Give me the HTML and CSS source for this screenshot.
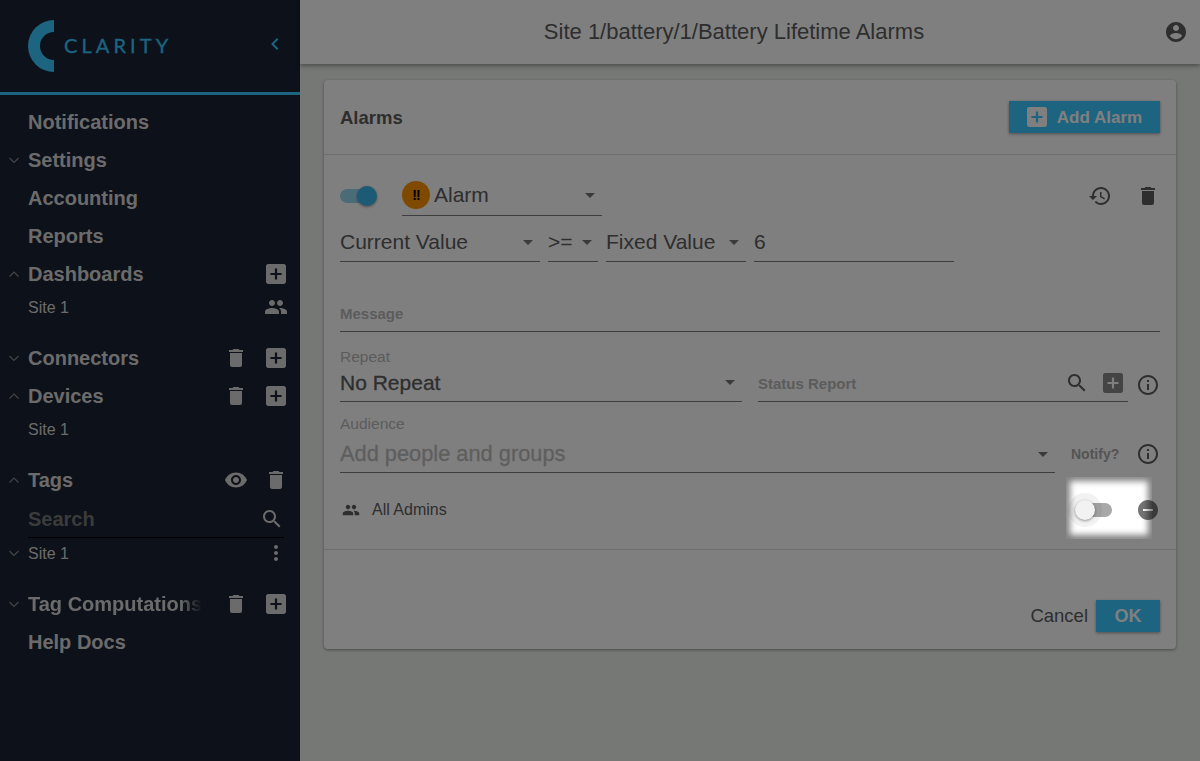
FILE: index.html
```html
<!DOCTYPE html>
<html lang="en">
<head>
    <meta charset="UTF-8">
    <title>Battery Lifetime Alarms</title>
    <link rel="stylesheet" href="styles.css">
</head>
<body>
    <svg class="sprite" xmlns="http://www.w3.org/2000/svg">
        <symbol id="i-trash" viewBox="0 0 24 24"><path d="M6 19c0 1.1.9 2 2 2h8c1.1 0 2-.9 2-2V7H6v12zM19 4h-3.5l-1-1h-5l-1 1H5v2h14V4z"/></symbol>
        <symbol id="i-add" viewBox="3 3 18 18"><path d="M19 3H5c-1.11 0-2 .9-2 2v14c0 1.1.89 2 2 2h14c1.1 0 2-.9 2-2V5c0-1.1-.9-2-2-2zm-2 10h-4v4h-2v-4H7v-2h4V7h2v4h4v2z"/></symbol>
        <symbol id="i-people" viewBox="0 0 24 24"><path d="M16 11c1.66 0 2.99-1.34 2.99-3S17.66 5 16 5c-1.66 0-3 1.34-3 3s1.34 3 3 3zm-8 0c1.66 0 2.99-1.34 2.99-3S9.66 5 8 5C6.34 5 5 6.34 5 8s1.34 3 3 3zm0 2c-2.33 0-7 1.17-7 3.5V19h14v-2.5c0-2.33-4.67-3.5-7-3.5zm8 0c-.29 0-.62.02-.97.05 1.16.84 1.97 1.97 1.97 3.45V19h6v-2.5c0-2.33-4.67-3.5-7-3.5z"/></symbol>
        <symbol id="i-eye" viewBox="0 0 24 24"><path d="M12 4.5C7 4.5 2.73 7.61 1 12c1.73 4.39 6 7.5 11 7.5s9.27-3.11 11-7.5c-1.73-4.39-6-7.5-11-7.5zM12 17c-2.76 0-5-2.24-5-5s2.24-5 5-5 5 2.24 5 5-2.24 5-5 5zm0-8c-1.66 0-3 1.34-3 3s1.34 3 3 3 3-1.34 3-3-1.34-3-3-3z"/></symbol>
        <symbol id="i-search" viewBox="0 0 24 24"><path d="M15.5 14h-.79l-.28-.27C15.41 12.59 16 11.11 16 9.5 16 5.91 13.09 3 9.5 3S3 5.91 3 9.5 5.91 16 9.5 16c1.61 0 3.09-.59 4.23-1.57l.27.28v.79l5 4.99L20.49 19l-4.99-5zm-6 0C7.01 14 5 11.99 5 9.5S7.01 5 9.5 5 14 7.01 14 9.5 11.99 14 9.5 14z"/></symbol>
        <symbol id="i-more" viewBox="0 0 24 24"><path d="M12 8c1.1 0 2-.9 2-2s-.9-2-2-2-2 .9-2 2 .9 2 2 2zm0 2c-1.1 0-2 .9-2 2s.9 2 2 2 2-.9 2-2-.9-2-2-2zm0 6c-1.1 0-2 .9-2 2s.9 2 2 2 2-.9 2-2-.9-2-2-2z"/></symbol>
        <symbol id="i-history" viewBox="0 0 24 24"><path d="M13 3c-4.97 0-9 4.03-9 9H1l3.89 3.89.07.14L9 12H6c0-3.87 3.13-7 7-7s7 3.13 7 7-3.13 7-7 7c-1.93 0-3.68-.79-4.94-2.06l-1.42 1.42C8.27 19.99 10.51 21 13 21c4.97 0 9-4.03 9-9s-4.03-9-9-9zm-1 5v5l4.28 2.54.72-1.21-3.5-2.08V8H12z"/></symbol>
        <symbol id="i-info" viewBox="0 0 24 24"><path d="M11 7h2v2h-2zm0 4h2v6h-2zm1-9C6.48 2 2 6.48 2 12s4.48 10 10 10 10-4.48 10-10S17.52 2 12 2zm0 18c-4.41 0-8-3.59-8-8s3.59-8 8-8 8 3.59 8 8-3.59 8-8 8z"/></symbol>
        <symbol id="i-account" viewBox="0 0 24 24"><path d="M12 2C6.48 2 2 6.48 2 12s4.48 10 10 10 10-4.48 10-10S17.52 2 12 2zm0 3c1.66 0 3 1.34 3 3s-1.34 3-3 3-3-1.34-3-3 1.34-3 3-3zm0 14.2c-2.5 0-4.71-1.28-6-3.22.03-1.99 4-3.08 6-3.08 1.99 0 5.97 1.09 6 3.08-1.29 1.94-3.5 3.22-6 3.22z"/></symbol>
        <symbol id="i-remove" viewBox="0 0 24 24"><path d="M12 2C6.48 2 2 6.48 2 12s4.48 10 10 10 10-4.48 10-10S17.52 2 12 2zm5 11H7v-2h10v2z"/></symbol>
        <symbol id="i-down" viewBox="0 0 12 12"><path d="M1.5 4l4.5 4.5L10.5 4" fill="none" stroke="currentColor" stroke-width="1.1"/></symbol>
        <symbol id="i-up" viewBox="0 0 12 12"><path d="M1.5 8.5L6 4l4.5 4.5" fill="none" stroke="currentColor" stroke-width="1.1"/></symbol>
        <symbol id="i-left" viewBox="0 0 24 24"><path d="M15.41 7.41L14 6l-6 6 6 6 1.41-1.41L10.83 12z"/></symbol>
    </svg>

    <aside class="sidebar">
        <div class="brand">
            <svg class="brand-mark" viewBox="0 0 26 52"><path d="M26 0A26 26 0 0 0 26 52V40A14 14 0 0 1 26 12Z"/></svg>
            <span class="brand-name">CLARITY</span>
            <svg class="icon collapse"><use href="#i-left"/></svg>
        </div>
        <nav class="nav">
            <div class="nav-item"><span class="nav-title">Notifications</span></div>
            <div class="nav-item">
                <svg class="chev"><use href="#i-down"/></svg>
                <span class="nav-title">Settings</span>
            </div>
            <div class="nav-item"><span class="nav-title">Accounting</span></div>
            <div class="nav-item"><span class="nav-title">Reports</span></div>
            <div class="nav-item">
                <svg class="chev"><use href="#i-up"/></svg>
                <span class="nav-title">Dashboards</span>
                <svg class="icon slot-b box"><use href="#i-add"/></svg>
            </div>
            <div class="nav-sub group-end">
                <span>Site 1</span>
                <svg class="icon slot-b"><use href="#i-people"/></svg>
            </div>
            <div class="nav-item">
                <svg class="chev"><use href="#i-down"/></svg>
                <span class="nav-title">Connectors</span>
                <svg class="icon slot-a"><use href="#i-trash"/></svg>
                <svg class="icon slot-b box"><use href="#i-add"/></svg>
            </div>
            <div class="nav-item">
                <svg class="chev"><use href="#i-up"/></svg>
                <span class="nav-title">Devices</span>
                <svg class="icon slot-a"><use href="#i-trash"/></svg>
                <svg class="icon slot-b box"><use href="#i-add"/></svg>
            </div>
            <div class="nav-sub group-end"><span>Site 1</span></div>
            <div class="nav-item">
                <svg class="chev"><use href="#i-up"/></svg>
                <span class="nav-title">Tags</span>
                <svg class="icon slot-a"><use href="#i-eye"/></svg>
                <svg class="icon slot-b"><use href="#i-trash"/></svg>
            </div>
            <div class="nav-search">
                <span>Search</span>
                <svg class="icon"><use href="#i-search"/></svg>
            </div>
            <div class="nav-sub site-row group-end">
                <svg class="chev"><use href="#i-down"/></svg>
                <span>Site 1</span>
                <svg class="icon slot-b"><use href="#i-more"/></svg>
            </div>
            <div class="nav-item">
                <svg class="chev"><use href="#i-down"/></svg>
                <span class="nav-title fade">Tag Computations</span>
                <svg class="icon slot-a"><use href="#i-trash"/></svg>
                <svg class="icon slot-b box"><use href="#i-add"/></svg>
            </div>
            <div class="nav-item"><span class="nav-title">Help Docs</span></div>
        </nav>
    </aside>

    <div class="main">
        <header class="topbar">
            <h1>Site 1/battery/1/Battery Lifetime Alarms</h1>
            <svg class="icon account"><use href="#i-account"/></svg>
        </header>

        <section class="card">
            <div class="card-head">
                <h2>Alarms</h2>
                <button class="btn btn-add"><svg class="icon box"><use href="#i-add"/></svg><span>Add Alarm</span></button>
            </div>

            <div class="card-body">
                <div class="row row-level">
                    <span class="toggle on"><span class="knob"></span></span>
                    <div class="select level">
                        <span class="badge">!!</span>
                        <span class="value">Alarm</span>
                        <span class="caret"></span>
                    </div>
                    <svg class="icon history"><use href="#i-history"/></svg>
                    <svg class="icon trash"><use href="#i-trash"/></svg>
                </div>

                <div class="row row-cond">
                    <div class="select w-200"><span class="value">Current Value</span><span class="caret"></span></div>
                    <div class="select w-50"><span class="value">&gt;=</span><span class="caret"></span></div>
                    <div class="select w-140"><span class="value">Fixed Value</span><span class="caret"></span></div>
                    <div class="select w-200"><span class="value">6</span></div>
                </div>

                <div class="text-field message">Message</div>

                <div class="row row-repeat">
                    <div class="labelled repeat">
                        <label>Repeat</label>
                        <div class="select"><span class="value medium">No Repeat</span><span class="caret"></span></div>
                    </div>
                    <div class="text-field status">
                        <span class="grow">Status Report</span>
                        <svg class="icon"><use href="#i-search"/></svg>
                    </div>
                    <svg class="icon box dark"><use href="#i-add"/></svg>
                    <svg class="icon info"><use href="#i-info"/></svg>
                </div>

                <div class="row row-audience">
                    <div class="labelled audience">
                        <label>Audience</label>
                        <div class="select"><span class="value hint">Add people and groups</span><span class="caret"></span></div>
                    </div>
                    <span class="notify">Notify?</span>
                    <svg class="icon info"><use href="#i-info"/></svg>
                </div>

                <div class="row row-admin">
                    <svg class="icon small"><use href="#i-people"/></svg>
                    <span class="admin-name">All Admins</span>
                    <span class="toggle off"><span class="knob"></span></span>
                    <svg class="icon remove"><use href="#i-remove"/></svg>
                </div>
            </div>

            <div class="card-foot">
                <button class="btn-text">Cancel</button>
                <button class="btn btn-ok">OK</button>
            </div>
        </section>
    </div>

    <div class="spotlight"></div>
</body>
</html>
```

FILE: styles.css
```css
:root {
    --teal: #38c8ff;
    --side: #1a2232;
    --side-text: #d6d6d6;
    --ink: #5c5c5c;
    --line: #7c7c7c;
    --muted: #b8b8b8;
}

* {
    box-sizing: border-box;
    margin: 0;
    padding: 0;
}

html, body {
    height: 100%;
    overflow: hidden;
}

body {
    display: flex;
    font-family: "Liberation Sans", Arial, sans-serif;
    color: var(--ink);
    background-color: #ecf0ec;
}

.sprite {
    display: none;
}

.icon {
    display: block;
    flex: none;
    width: 24px;
    height: 24px;
    fill: currentColor;
}

.icon.box {
    width: 20px;
    height: 20px;
}

/* sidebar */
.sidebar {
    flex: none;
    width: 300px;
    background-color: var(--side);
    color: var(--side-text);
}

.brand {
    display: flex;
    align-items: center;
    height: 95px;
    padding: 0 13px 0 28px;
    border-bottom: 3px solid var(--teal);
}

.brand-mark {
    width: 26px;
    height: 52px;
    fill: var(--teal);
}

.brand-name {
    margin: 0 0 2px 10px;
    font-family: Lato, sans-serif;
    font-size: 20px;
    letter-spacing: 4.1px;
    -webkit-text-stroke: 0.3px var(--teal);
    color: var(--teal);
}

.collapse {
    margin: 0 0 4px auto;
    color: var(--teal);
}

.nav {
    padding-top: 8px;
}

.nav-item,
.nav-sub,
.nav-search {
    position: relative;
    display: flex;
    align-items: center;
    padding: 0 12px 0 28px;
}

.nav-item {
    height: 38px;
}

.nav-title {
    font-size: 20px;
    font-weight: 700;
    white-space: nowrap;
}

.nav-title.fade {
    width: 174px;
    overflow: hidden;
    -webkit-mask-image: linear-gradient(to right, #000 88%, transparent);
    mask-image: linear-gradient(to right, #000 88%, transparent);
}

.nav-sub {
    height: 28px;
    padding-top: 1px;
    font-size: 16px;
}

.nav-sub.site-row {
    height: 30px;
}

.group-end {
    margin-bottom: 18px;
}

.site-row.group-end {
    margin-bottom: 17px;
}

.chev {
    position: absolute;
    left: 8px;
    top: 50%;
    width: 12px;
    height: 12px;
    margin-top: -6px;
    color: #8c8c8c;
}

.slot-a {
    position: absolute;
    right: 52px;
    top: 50%;
    margin-top: -12px;
}

.slot-b {
    position: absolute;
    right: 12px;
    top: 50%;
    margin-top: -12px;
}

.slot-b.box {
    right: 14px;
    margin-top: -10px;
}

.nav-search {
    justify-content: space-between;
    height: 38px;
    margin: 1px 16px 0 28px;
    padding: 1px 0 0;
    border-bottom: 1px solid #000;
    font-size: 20px;
    font-weight: 700;
    color: #767676;
}

.nav-search .icon {
    color: var(--side-text);
}

/* main column */
.main {
    flex: 1;
    min-width: 0;
}

.topbar {
    position: relative;
    display: flex;
    align-items: center;
    justify-content: center;
    height: 64px;
    padding-right: 32px;
    background-color: #fff;
    box-shadow: 0 2px 4px rgba(0, 0, 0, 0.35);
}

.topbar h1 {
    font-size: 22px;
    font-weight: 400;
}

.account {
    position: absolute;
    right: 12px;
    top: 20px;
}

.card {
    height: 569px;
    margin: 16px 24px 0;
    background-color: #fff;
    border-radius: 4px;
    box-shadow: 0 1px 3px rgba(0, 0, 0, 0.4);
}

.card-head {
    display: flex;
    align-items: center;
    justify-content: space-between;
    height: 75px;
    padding: 0 16px;
    border-bottom: 1px solid #dcdcdc;
}

.card-head h2 {
    padding-top: 1px;
    font-size: 18.5px;
    font-weight: 700;
}

.btn {
    display: flex;
    align-items: center;
    justify-content: center;
    height: 32px;
    border: none;
    background-color: var(--teal);
    color: #fff;
    font-family: inherit;
    font-size: 18px;
    font-weight: 700;
    box-shadow: 0 1px 3px rgba(0, 0, 0, 0.4);
}

.btn-add {
    width: 151px;
    font-size: 17px;
}

.btn-add span {
    padding-top: 1px;
}

.btn-add .icon {
    margin-right: 10px;
}

.card-body {
    height: 395px;
    padding: 20px 16px 0;
    border-bottom: 1px solid #dcdcdc;
}

.row {
    display: flex;
    align-items: center;
}

/* form fields */
.select {
    display: flex;
    align-items: center;
    border-bottom: 1px solid var(--line);
}

.value {
    flex: 1;
    font-size: 21px;
    white-space: nowrap;
}

.value.medium {
    -webkit-text-stroke: 0.3px var(--ink);
}

.value.hint {
    font-size: 21.8px;
    color: #bdbdbd;
    -webkit-text-stroke: 0.3px #bdbdbd;
}

.caret {
    flex: none;
    width: 0;
    height: 0;
    margin: 0 7px;
    border-left: 5px solid transparent;
    border-right: 5px solid transparent;
    border-top: 5px solid #757575;
}

.toggle {
    position: relative;
    display: block;
    flex: none;
    height: 14px;
    border-radius: 7px;
}

.knob {
    position: absolute;
    top: -3px;
    width: 20px;
    height: 20px;
    border-radius: 50%;
    box-shadow: 0 1px 3px rgba(0, 0, 0, 0.4);
}

.toggle.on {
    width: 37px;
    margin-right: 25px;
    background: linear-gradient(to right, #99d7f2 86%, transparent 86%);
}

.toggle.on .knob {
    right: 0;
    background-color: #38b4ea;
}

.toggle.off {
    width: 37px;
    margin-left: auto;
    background: linear-gradient(to right, transparent 27%, #a8a8a8 27%);
}

.toggle.off .knob {
    left: 0;
    background-color: #fff;
}

.toggle.off .knob::before {
    content: "";
    position: absolute;
    top: -7px;
    left: -7px;
    width: 34px;
    height: 34px;
    border-radius: 50%;
    background-color: rgba(0, 0, 0, 0.05);
}

.row-level {
    height: 41px;
}

.level {
    width: 200px;
    height: 41px;
}

.badge {
    flex: none;
    width: 28px;
    height: 28px;
    margin-right: 4px;
    border-radius: 50%;
    background-color: #ff9500;
    color: #000;
    font-size: 14px;
    font-weight: 700;
    letter-spacing: -1px;
    line-height: 28px;
    text-align: center;
}

.history {
    margin-left: auto;
}

.trash {
    margin-left: 24px;
}

.row-cond {
    gap: 8px;
    height: 39px;
    margin-top: 7px;
}

.row-cond .select {
    height: 39px;
}

.w-200 {
    width: 200px;
}

.w-140 {
    width: 140px;
}

.w-50 {
    width: 50px;
}

.w-50 .caret {
    margin: 0 6px;
}

.text-field {
    display: flex;
    align-items: center;
    border-bottom: 1px solid var(--line);
    font-size: 15px;
    font-weight: 700;
    color: var(--muted);
}

.grow {
    flex: 1;
}

.message {
    height: 36px;
    margin-top: 34px;
}

.labelled label {
    display: block;
    font-size: 15.5px;
    color: var(--muted);
}

.row-repeat {
    align-items: flex-end;
    height: 54px;
    margin-top: 16px;
}

.repeat {
    width: 402px;
}

.repeat label {
    padding-top: 1px;
}

.repeat .select {
    height: 36px;
    padding-bottom: 2px;
}

.status {
    width: 370px;
    height: 37px;
    margin-left: 16px;
}

.status .grow {
    padding-top: 1px;
}

.status .icon {
    margin-right: 39px;
    color: var(--ink);
}

.row-repeat .box.dark {
    margin: 0 0 9px -25px;
    color: #888;
}

.row-repeat .info {
    margin: 0 0 5px auto;
}

.row-audience {
    align-items: flex-end;
    height: 59px;
    margin-top: 12px;
}

.audience {
    width: 715px;
}

.audience label {
    padding-top: 2px;
}

.audience .select {
    height: 40px;
    padding-top: 3px;
}

.notify {
    margin: 0 0 11px 16px;
    font-size: 14px;
    font-weight: 700;
    color: #a8a8a8;
}

.row-audience .info {
    margin: 0 0 7px auto;
}

.row-admin {
    height: 40px;
    margin-top: 17px;
    padding-left: 2px;
}

.small {
    width: 18px;
    height: 18px;
}

.admin-name {
    margin-left: 12px;
    font-size: 16px;
}

.remove {
    margin-left: 24px;
    color: #757575;
}

.card-foot {
    display: flex;
    align-items: center;
    justify-content: flex-end;
    gap: 8px;
    padding: 50px 16px 0;
}

.btn-text {
    border: none;
    background: none;
    color: var(--ink);
    font-family: inherit;
    font-size: 18.5px;
}

.btn-ok {
    width: 64px;
}

/* dim layer with a soft-edged hole around the highlighted switch */
.spotlight {
    position: absolute;
    left: 1066px;
    top: 477px;
    width: 86px;
    height: 62px;
    box-shadow: 0 0 0 2000px rgba(0, 0, 0, 0.5), inset 0 0 6px 4px rgba(0, 0, 0, 0.5);
}
```
